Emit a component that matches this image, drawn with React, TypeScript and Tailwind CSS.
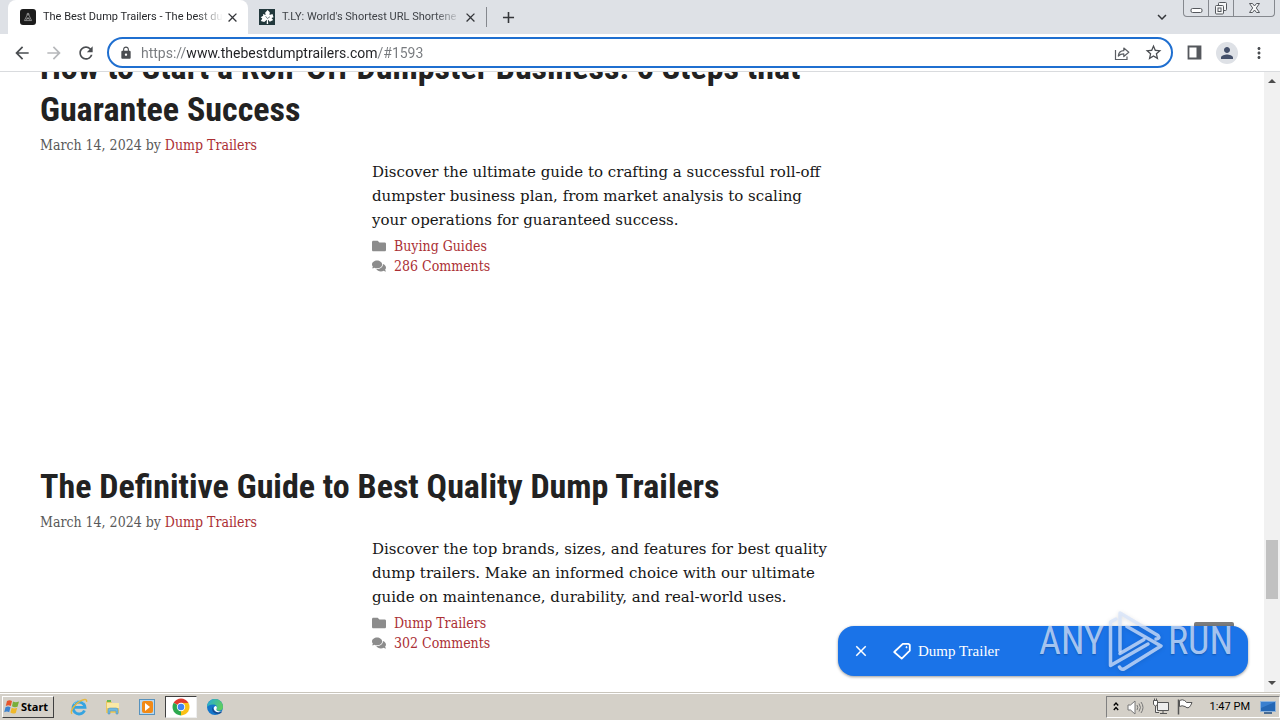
import type { ReactNode } from 'react';
import { FaFolder, FaComments } from 'react-icons/fa';
import {
  MdArrowBack,
  MdArrowForward,
  MdRefresh,
  MdLock,
  MdStarBorder,
  MdPerson,
  MdMoreVert,
  MdClose,
  MdAdd,
  MdExpandMore,
} from 'react-icons/md';

interface Post {
  title: string;
  excerpt: string;
  category: string;
  comments: string;
}

const posts: Post[] = [
  {
    title: 'How to Start a Roll-Off Dumpster Business: 6 Steps that Guarantee Success',
    excerpt:
      'Discover the ultimate guide to crafting a successful roll-off dumpster business plan, from market analysis to scaling your operations for guaranteed success.',
    category: 'Buying Guides',
    comments: '286 Comments',
  },
  {
    title: 'The Definitive Guide to Best Quality Dump Trailers',
    excerpt:
      'Discover the top brands, sizes, and features for best quality dump trailers. Make an informed choice with our ultimate guide on maintenance, durability, and real-world uses.',
    category: 'Dump Trailers',
    comments: '302 Comments',
  },
];

function DumpIcon() {
  return (
    <svg width="16" height="16" viewBox="0 0 16 16" className="shrink-0" aria-hidden="true">
      <rect width="16" height="16" rx="3" fill="#1c1c1c" />
      <path d="M8 4.2 4.4 11.6h7.2zM6.3 9.3h3.4M6 11.6l2-3 2 3" fill="none" stroke="#9a9a9a" strokeWidth="0.8" />
      <circle cx="8" cy="5.2" r="1" fill="none" stroke="#9a9a9a" strokeWidth="0.7" />
    </svg>
  );
}

function LeafIcon() {
  return (
    <svg width="16" height="16" viewBox="0 0 16 16" className="shrink-0" aria-hidden="true">
      <rect width="16" height="16" fill="#22383c" />
      <path
        d="M8.6 1 10.8 3.2 10.5 6l3-1 1 3.3-2 .6 1.7 2.2-3.4 1.7-1.9-2.2.3 4.400H7.700l.2-4.300-2.700 2.200-3.400-1 1.500-2.400-1.600-1.300 2.500-1.400-.3-1.900 2.800 1-.6-2.200z"
        fill="#fff"
      />
      <path d="M8.4 9.5 6.600 7.200M8.400 9.500l2.600-1.800" stroke="#22383c" strokeWidth="0.6" />
    </svg>
  );
}

function Tab({ title, icon, active }: { title: string; icon: ReactNode; active?: boolean }) {
  return (
    <div
      className={
        active
          ? 'flex h-full w-[240px] items-center rounded-t-lg bg-white pr-2 pl-3 text-[#27292c]'
          : 'flex h-full w-[238px] items-center pr-2 pl-[11px] text-[#3f4247]'
      }
    >
      {icon}
      <span className="ml-[7px] flex-1 overflow-hidden mask-r-from-85% text-[11px] whitespace-nowrap">{title}</span>
      <button aria-label="Close tab" className="ml-0.5">
        <MdClose size={15} color="#34363a" />
      </button>
    </div>
  );
}

function WindowControls() {
  return (
    <div className="mr-[5px] flex h-[17px] rounded-b border border-t-0 border-[#85888e]">
      <button aria-label="Minimize" className="flex w-[25px] items-center justify-center border-r border-[#85888e]">
        <svg width="13" height="17" viewBox="0 0 13 17">
          <rect x="1" y="8.500" width="11" height="4" rx="1.500" fill="#fff" stroke="#55585d" />
        </svg>
      </button>
      <button aria-label="Restore" className="flex w-[25px] items-center justify-center border-r border-[#85888e]">
        <svg width="14" height="17" viewBox="0 0 14 17" fill="#f6f7f8" stroke="#55585d">
          <rect x="4.500" y="2.500" width="8" height="8" rx="1" />
          <rect x="1.500" y="5.500" width="8" height="8.500" rx="1" />
          <rect x="4" y="8" width="3" height="3.500" />
        </svg>
      </button>
      <button aria-label="Close" className="flex w-10 items-center justify-center">
        <svg width="13" height="17" viewBox="0 0 13 17">
          <path
            d="M1.500 3.500h3l2 2.500 2-2.500h3L8.300 8l3.200 4.500h-3l-2-2.500-2 2.500h-3L4.700 8z"
            fill="#f6f7f8"
            stroke="#55585d"
          />
        </svg>
      </button>
    </div>
  );
}

function TabStrip() {
  return (
    <div className="flex h-[34px] items-stretch bg-[#dee1e6] font-['Roboto',sans-serif]">
      <div className="flex flex-1 items-center pl-2">
        <Tab title="The Best Dump Trailers - The best du" icon={<DumpIcon />} active />
        <Tab title="T.LY: World's Shortest URL Shortene" icon={<LeafIcon />} />
        <span className="h-5 w-px bg-[#85888e]" />
        <button aria-label="New tab" className="ml-3">
          <MdAdd size={19} color="#34363a" />
        </button>
      </div>
      <div className="flex items-start">
        <button aria-label="Search tabs" className="mt-2 mr-3">
          <MdExpandMore size={18} color="#34363a" />
        </button>
        <WindowControls />
      </div>
    </div>
  );
}

function Toolbar() {
  return (
    <div className="flex h-[38px] items-center border-b border-[#d9dbde] bg-white pl-3 text-[#4a4d51]">
      <button aria-label="Back">
        <MdArrowBack size={20} />
      </button>
      <button aria-label="Forward" className="ml-3 text-[#b6b8bb]">
        <MdArrowForward size={20} />
      </button>
      <button aria-label="Reload" className="ml-3">
        <MdRefresh size={20} />
      </button>
      <div className="ml-[11px] flex h-[31px] flex-1 items-center rounded-full border-2 border-[#1f6fd0] pr-2 pl-2.5">
        <MdLock size={14} />
        <input
          aria-label="Address"
          defaultValue="https://www.thebestdumptrailers.com/#1593"
          className="ml-2 min-w-0 flex-1 bg-[linear-gradient(90deg,#777a7e_45px,#202124_45px,#202124_237px,#777a7e_237px)] bg-clip-text font-['Roboto',sans-serif] text-sm text-transparent outline-none"
        />
        <button aria-label="Share this page">
          <svg width="16" height="16" viewBox="0 0 16 16" fill="none" stroke="#5b5e63" strokeWidth="1.200">
            <path d="M1.500 5v9.500h11.500V11.500" />
            <path d="M4.300 11c.4-3.500 2.300-5.200 5.500-5.300V3l5 4.300-5 4.200V8.800C7.300 8.800 5.600 9.500 4.300 11z" strokeLinejoin="round" />
          </svg>
        </button>
        <button aria-label="Bookmark this page" className="ml-3.5">
          <MdStarBorder size={19} />
        </button>
      </div>
      <button aria-label="Side panel" className="ml-3.5">
        <svg width="15" height="15" viewBox="0 0 15 15">
          <path d="M1.500 1.500h12v12h-12z" fill="#fff" stroke="#55585d" strokeWidth="1.800" />
          <path d="M9.500 1h4.500v13H9.500z" fill="#55585d" />
        </svg>
      </button>
      <button aria-label="Profile" className="ml-3.5 flex h-[22px] w-[22px] items-center justify-center rounded-full bg-[#dee1e6]">
        <MdPerson size={18} color="#44506a" />
      </button>
      <button aria-label="Menu" className="mr-3 ml-3">
        <MdMoreVert size={18} />
      </button>
    </div>
  );
}

function Article({ post }: { post: Post }) {
  return (
    <article className="mb-1">
      <h2 className="font-['Roboto_Condensed',Roboto,sans-serif] text-[34px] leading-[42px] font-bold text-[#222]">
        {post.title}
      </h2>
      <p className="mt-[5px] mb-[5px] font-['DejaVu_Serif_Condensed','DejaVu_Serif',serif] text-sm leading-5 text-[#595959]">
        March 14, 2024 by{' '}
        <a href="#author" className="text-[#ab2f34]">
          Dump Trailers
        </a>
      </p>
      <div className="ml-[332px] min-h-[301px]">
        <p className="font-['DejaVu_Serif',serif] text-[15px] leading-6 text-[#161616]">{post.excerpt}</p>
        <footer className="mt-1 font-['DejaVu_Serif_Condensed','DejaVu_Serif',serif] text-sm leading-5 text-[#ab2f34]">
          <div className="flex items-center gap-2">
            <FaFolder size={14} color="#8c8c8c" />
            <a href="#category">{post.category}</a>
          </div>
          <div className="flex items-center gap-2">
            <FaComments size={14} color="#8c8c8c" />
            <a href="#comments">{post.comments}</a>
          </div>
        </footer>
      </div>
    </article>
  );
}

function Scrollbar() {
  return (
    <div className="flex w-4 flex-col items-center bg-[#f1f1f1]">
      <svg width="16" height="17" viewBox="0 0 16 17">
        <path d="M4 11 8 7l4 4z" fill="#4d4d4d" />
      </svg>
      <div className="w-full flex-[451]" />
      <div className="w-3 flex-[59] bg-[#c1c1c1]" />
      <div className="w-full flex-[76]" />
      <svg width="16" height="17" viewBox="0 0 16 17">
        <path d="M4 6h8l-4 4z" fill="#4d4d4d" />
      </svg>
    </div>
  );
}

function Watermark() {
  return (
    <div className="absolute right-[15px] bottom-0.5 flex items-center font-['Roboto_Condensed',Roboto,sans-serif] text-[38px] leading-none font-normal text-[#b9d2f6]/90 text-shadow-sm">
      <span>ANY</span>
      <svg width="60" height="66" viewBox="0 0 60 66" fill="none" className="mx-0.5 drop-shadow-sm" aria-hidden="true">
        <g stroke="#d5e3fa" strokeOpacity="0.75" strokeWidth="3.500" strokeLinejoin="round" strokeLinecap="round">
          <path d="M14 43V5l38 22.500q2.500 3-2 3.500" />
          <path d="M10 11 4.500 14v43.500L42 36" />
          <path d="M21 18.500 55 38 18 61q-3 1-4.500-2" />
          <path d="M14 45.500 38 31.500" />
        </g>
      </svg>
      <span>RUN</span>
    </div>
  );
}

function Banner() {
  return (
    <div className="absolute right-8 bottom-4 flex h-[50px] w-[410px] items-center rounded-2xl bg-[#1a73e8] pl-3.5 text-white shadow-[0_1px_3px_#0006]">
      <button aria-label="Dismiss">
        <MdClose size={18} />
      </button>
      <a href="#dump-trailer" className="ml-[22px] flex items-center gap-1.5 font-['Liberation_Serif',serif] text-[15px]">
        <svg width="20" height="20" viewBox="0 0 20 20" fill="none" stroke="#fff" strokeWidth="1.800" strokeLinejoin="round">
          <path d="M10.800 2.800h5.700l1.300 1.200v5.700L9.700 17.600 2.200 11z" />
          <circle cx="14.500" cy="6.200" r="0.600" fill="#fff" strokeWidth="1" />
        </svg>
        Dump Trailer
      </a>
      <Watermark />
    </div>
  );
}

function ExplorerIcon() {
  return (
    <svg width="18" height="18" viewBox="0 0 18 18" fill="none">
      <path d="M14.500 12.500A6 6 0 1 1 15 9.300H4" stroke="#36a4e0" strokeWidth="2.800" />
      <path d="M14 4.500A6 6 0 0 0 4 6" stroke="#8ad2f5" strokeWidth="1" />
      <path d="M2 15.800C-.5 13 5 6 10 3.200 14 .9 17.300.8 16.500 4" stroke="#e5b841" strokeWidth="1.400" />
    </svg>
  );
}

function FolderIcon() {
  return (
    <svg width="18" height="18" viewBox="0 0 18 18">
      <path d="M2 3h5l1 2h7v10H2z" fill="#e9c964" />
      <path d="M3 2h4v2H3z" fill="#68b850" />
      <path d="M3 5h12v5H3z" fill="#fbe9a5" />
      <path d="M4 16v-4q0-2 2-2h6q2 0 2 2v4h-2v-3H6v3z" fill="#70b9df" stroke="#4e8fb6" strokeWidth="0.500" />
    </svg>
  );
}

function PlayerIcon() {
  return (
    <svg width="18" height="18" viewBox="0 0 18 18">
      <rect x="1.500" y="1.500" width="15" height="15" fill="#b8d8f0" stroke="#5792bd" />
      <rect x="4" y="3" width="11" height="12" rx="2" fill="#f28a16" />
      <path d="m7 5 5 4-5 4z" fill="#fff" />
    </svg>
  );
}

function ChromeIcon() {
  return (
    <svg width="18" height="18" viewBox="0 0 18 18">
      <path d="M9 9 1.640 4.750A8.500 8.500 0 0 1 16.360 4.750z" fill="#e33b2e" />
      <path d="M9 9h0L16.360 4.750A8.500 8.500 0 0 1 9 17.500z" fill="#fbc116" />
      <path d="M9 9v8.500A8.500 8.500 0 0 1 1.640 4.750z" fill="#2da94f" />
      <path d="M9 4.750h7.360L12.700 11z" fill="#fbc116" />
      <path d="M9 4.750h7.360L12 3z" fill="#e33b2e" />
      <path d="M12.700 11 9 17.500 9 13z" fill="#fbc116" />
      <circle cx="9" cy="9" r="4.200" fill="#fff" />
      <circle cx="9" cy="9" r="3.300" fill="#4285f4" />
    </svg>
  );
}

function EdgeIcon() {
  return (
    <svg width="18" height="18" viewBox="0 0 18 18">
      <defs>
        <linearGradient id="edge-wave" x1="0" y1="0" x2="1" y2="0.400">
          <stop offset="0" stopColor="#24a9dd" />
          <stop offset="1" stopColor="#5ccd62" />
        </linearGradient>
      </defs>
      <circle cx="9" cy="9" r="8" fill="#1476ca" />
      <path d="M1 9a8 8 0 0 1 16 0c0 2.500-2 3.700-4.200 3.700-2 0-2.800-.8-2.200-1.700C12 8.500 10 6.500 7 6.500 3.500 6.500 1.500 8 1 9z" fill="url(#edge-wave)" />
      <path d="M6.500 9C5 12 7.500 16 12 16c2 0 3.500-1.200 4.200-2.500-4 1.800-8.500.5-9.700-4.500z" fill="#164c93" />
      <path d="M10.500 11c.8-1.300.3-2.600-.7-3 -1.300.2-2.200 1.200-2 3 .5 2.700 4.200 4 7.400 2.500-2 0-5.500-.6-4.700-2.500z" fill="#fff" />
    </svg>
  );
}

function StartFlag() {
  return (
    <svg width="16" height="16" viewBox="0 0 16 16">
      <path d="M3 2q2.500-1.500 5 0L6.800 7q-2.500-1.500-5 0z" fill="#e7552b" />
      <path d="M9 2.500q2.500 1.500 6 0L13.500 7.800Q10.500 9 8 7.300z" fill="#79ae3a" />
      <path d="M1.500 8.300q2.500-1.500 5 0L5.200 13.200q-2.200-1.300-5 0z" fill="#3d83cf" />
      <path d="M7.700 8.800q2.500 1.400 5.500 0L11.800 14Q8.800 15.200 6.400 13.600z" fill="#efb829" />
    </svg>
  );
}

function Taskbar() {
  return (
    <div className="flex h-7 items-center border-t border-[#c9c5bc] bg-[#d4d0c8] pl-0.5 inset-shadow-[0_1px_0_#fff]">
      <button className="mt-px flex h-[22px] w-[52px] items-center gap-px border border-t-white border-r-[#404040] border-b-[#404040] border-l-white pl-px text-[11px] font-bold text-black">
        <StartFlag />
        Start
      </button>
      <div className="ml-[9px] flex flex-1 items-center gap-[2px] [&>button]:flex [&>button]:h-[22px] [&>button]:w-8 [&>button]:items-center [&>button]:justify-center">
        <button aria-label="Internet Explorer">
          <ExplorerIcon />
        </button>
        <button aria-label="File Explorer">
          <FolderIcon />
        </button>
        <button aria-label="Media Player">
          <PlayerIcon />
        </button>
        <button aria-label="Chrome" className="border border-t-[#404040] border-r-[#eee] border-b-[#eee] border-l-[#404040] bg-white">
          <ChromeIcon />
        </button>
        <button aria-label="Edge">
          <EdgeIcon />
        </button>
      </div>
      <div className="mt-px flex h-[22px] items-center border border-t-[#808080] border-r-white border-b-white border-l-[#808080] pr-[3px] pl-1.5 font-['Roboto',sans-serif] text-[11px] text-black">
        <svg width="6" height="12" viewBox="0 0 6 12" fill="none" stroke="#000" strokeWidth="1.300">
          <path d="m.8 4.500 2.200-2.500 2.200 2.500M.8 9l2.200-2.500L5.200 9" />
        </svg>
        <svg width="17" height="17" viewBox="0 0 17 17" fill="#fff" stroke="#777" className="ml-2">
          <path d="M1 6h2.500L8 2v13l-4.500-4H1z" />
          <path d="M10 6q1.500 2.500 0 5M12 4.500q3 4 0 8M14 3q4 5.500 0 11" fill="none" />
        </svg>
        <svg width="18" height="18" viewBox="0 0 18 18" fill="#eee" stroke="#555" className="ml-2">
          <path d="M5.500 4.500h11v8h-11zM8 15.500h7M11 13v2M3.500 8v6.500H7" />
          <path d="M1.500 2.500h4v4l-2 1.500-2-1.500zM2.500 2.500V.5M4.500 2.500V.5" fill="#fff" />
        </svg>
        <svg width="18" height="18" viewBox="0 0 18 18" fill="#fff" stroke="#555" className="ml-1.5">
          <path d="M3.500 2.500q3-1.500 5 0t2 2h5.500q-1 3-3 5-2 1-4-1-3-1.500-5.500 0z" />
          <path d="M2.500 1.500v15" strokeWidth="1.500" />
        </svg>
        <span className="ml-4">1:47 PM</span>
        <svg width="16" height="16" viewBox="0 0 16 16" className="ml-2.5">
          <path d="M.5 2.500h15v10H.5z" fill="#2467b5" stroke="#8fb4dc" />
          <path d="M1 3h14L1 9z" fill="#397fcf" />
          <path d="M4 14h8" stroke="#4a6c93" strokeWidth="2" />
        </svg>
      </div>
    </div>
  );
}

export default function App() {
  return (
    <div className="flex h-screen flex-col overflow-hidden bg-white font-['Noto_Sans',sans-serif]">
      <TabStrip />
      <Toolbar />
      <div className="relative flex min-h-0 flex-1">
        <main className="flex-1 overflow-hidden pl-10">
          <div className="-mt-[26px] max-w-[792px]">
            {posts.map((post) => (
              <Article key={post.title} post={post} />
            ))}
          </div>
        </main>
        <Scrollbar />
        <button aria-label="Back to top" className="absolute right-[46px] bottom-[30px] h-10 w-10 rounded-xs bg-[#7c7c7c]" />
        <Banner />
      </div>
      <Taskbar />
    </div>
  );
}
